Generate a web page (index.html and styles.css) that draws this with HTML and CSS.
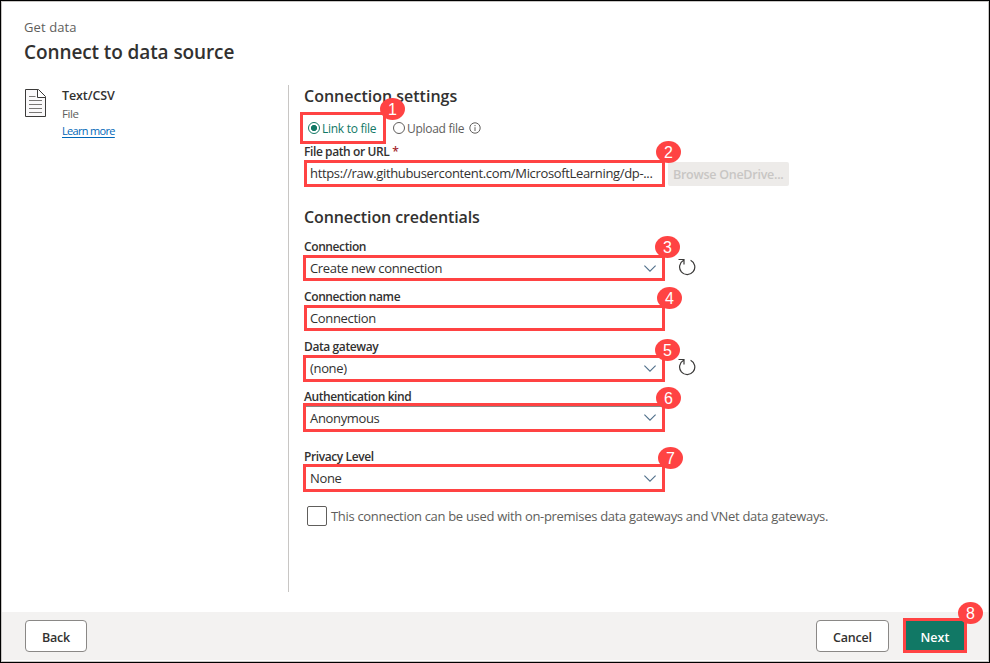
FILE: index.html
```html
<!DOCTYPE html>
<html lang="en">
<head>
<meta charset="utf-8">
<title>Connect to data source</title>
<link rel="stylesheet" href="styles.css">
</head>
<body>
<div class="dialog">
  <header class="header">
    <div class="eyebrow"><span>Get data</span></div>
    <h1 class="title"><span>Connect to data source</span></h1>
  </header>
  <div class="content">
    <aside class="source">
      <svg class="file-icon" width="22" height="30" viewBox="0 0 22 30" fill="none" stroke="#3b3a39"><path d="M.5 1.5H13.5L20.5 8.500V28.500H.5Z" fill="#faf9fa"/><path d="M12.500 1.500V9.500H20.500" fill="#fff"/><path stroke="#797775" d="M4 8.500H10.500M4 12.500H17M4 16.500H17M4 20.500H17M4 24.500H17"/></svg>
      <div class="source-text">
        <div class="source-name"><span>Text/CSV</span></div>
        <div class="source-kind"><span>File</span></div>
        <a class="learn" href="#">Learn more</a>
      </div>
    </aside>
    <main class="settings">
      <h2 class="section-title"><span>Connection settings</span></h2>
      <div class="radios">
        <div class="radio selected"><i class="dot"></i><span>Link to file</span><b class="badge b1">1</b></div>
        <div class="radio"><i class="dot"></i><span>Upload file</span>
          <svg class="info" width="12" height="12" viewBox="0 0 12 12" fill="none" stroke="#605e5c"><circle cx="6" cy="6" r="5.200"/><path d="M6 5.200V9M6 3V4.200"/></svg>
        </div>
      </div>
      <div class="label l-url"><span>File path or URL</span><em>*</em></div>
      <div class="row">
        <div class="box inset h27 raised"><span>https://raw.githubusercontent.com/MicrosoftLearning/dp-...</span><b class="badge b2">2</b></div>
        <div class="browse"><span>Browse OneDrive...</span></div>
      </div>
      <h2 class="section-title second"><span>Connection credentials</span></h2>
      <div class="label l-conn"><span>Connection</span></div>
      <div class="row">
        <div class="box h26"><span>Create new connection</span><svg class="chev" width="12" height="7" viewBox="0 0 12 7"><path d="M.4.6L6 6.200L11.600.6"/></svg><b class="badge b3">3</b></div>
        <svg class="refresh" width="18" height="18" viewBox="0 0 18 18"><path d="M.5 1.500H6V6.500M5.600 2.300A7.600 7.600 0 1 0 12.600 2.200"/></svg>
      </div>
      <div class="label l-name"><span>Connection name</span></div>
      <div class="row"><div class="box inset h26"><span>Connection</span><b class="badge b4">4</b></div></div>
      <div class="label l-gate"><span>Data gateway</span></div>
      <div class="row">
        <div class="box h27 raised"><span>(none)</span><svg class="chev" width="12" height="7" viewBox="0 0 12 7"><path d="M.4.6L6 6.200L11.600.6"/></svg><b class="badge b5">5</b></div>
        <svg class="refresh" width="18" height="18" viewBox="0 0 18 18"><path d="M.5 1.500H6V6.500M5.600 2.300A7.600 7.600 0 1 0 12.600 2.200"/></svg>
      </div>
      <div class="label l-auth"><span>Authentication kind</span></div>
      <div class="row"><div class="box h29"><span>Anonymous</span><svg class="chev" width="12" height="7" viewBox="0 0 12 7"><path d="M.4.6L6 6.200L11.600.6"/></svg><b class="badge b6">6</b></div></div>
      <div class="label l-priv"><span>Privacy Level</span></div>
      <div class="row"><div class="box h28"><span>None</span><svg class="chev" width="12" height="7" viewBox="0 0 12 7"><path d="M.4.6L6 6.200L11.600.6"/></svg><b class="badge b7">7</b></div></div>
      <div class="check"><i class="checkbox"></i><span>This connection can be used with on-premises data gateways and VNet data gateways.</span></div>
    </main>
  </div>
  <footer class="footer">
    <div class="btn back"><span>Back</span></div>
    <div class="btn cancel"><span>Cancel</span></div>
    <div class="next"><span>Next</span><b class="badge b8">8</b></div>
  </footer>
</div>
</body>
</html>
```
FILE: styles.css
```css
* { box-sizing: border-box; }
body { margin: 0; font-family: "Open Sans", "Noto Sans", sans-serif; font-size: 13px; color: #323130; background: #fff; }
.dialog { width: 990px; height: 663px; border: 1px solid #000; box-shadow: inset 0 0 0 1px #c8c6c4; padding: 1px; display: flex; flex-direction: column; }
span { white-space: nowrap; }
.header { height: 83px; padding: 15px 0 0 22px; }
.eyebrow { font-size: 13px; line-height: 20px; color: #605e5c; letter-spacing: .1px; }
.title { margin: 1px 0 0; font-size: 19px; font-weight: 600; line-height: 28px; letter-spacing: -.1px; }
.content { display: flex; height: 527px; }
.source { width: 286px; padding: 3px 0 0 23px; display: flex; }
.file-icon { margin-right: 15px; }
.source-name { font-weight: 600; font-size: 12.500px; line-height: 16px; letter-spacing: -.1px; }
.source-kind { font-size: 11.500px; line-height: 20px; color: #605e5c; letter-spacing: -.4px; }
.learn { display: block; margin-top: -1px; font-size: 11px; line-height: 15px; letter-spacing: -.68px; color: #0067b8; text-underline-offset: 2px; white-space: nowrap; }
.settings { border-left: 1px solid #c8c6c4; height: 507px; width: 600px; padding-left: 14px; }
.section-title { margin: 0; padding-left: 1px; font-size: 16px; font-weight: 600; line-height: 22px; height: 27px; }
.radios { display: flex; margin-left: -3px; height: 32px; align-items: center; }
.radio { display: flex; align-items: center; color: #605e5c; font-size: 12px; letter-spacing: -.28px; padding-left: 7px; }
.dot { width: 12px; height: 12px; border: 1px solid #605e5c; border-radius: 50%; margin-right: 2px; flex: none; }
.selected { position: relative; width: 86px; height: 32px; border: 3px solid #ff4343; padding-left: 5px; color: #117865; }
.selected .dot { border-color: #117865; background: radial-gradient(circle, #117865 0 2.800px, #fff 3.300px); }
.info { margin-left: 5px; }
.label { font-size: 12px; font-weight: 600; line-height: 16px; letter-spacing: -.4px; padding-left: 1px; }
.label em { color: #a4262c; font-style: normal; margin-left: 3px; }
.l-url { height: 16px; }
.row { display: flex; align-items: center; }
.box { position: relative; width: 362px; border: 3px solid #ff4343; padding: 0 6px 0 4px; display: flex; align-items: center; justify-content: space-between; font-size: 13px; letter-spacing: -.34px; }
.inset { width: 361px; margin-left: 1px; padding-left: 3px; }
.raised { padding-bottom: 1px; }
.h26 { height: 26px; } .h27 { height: 27px; } .h28 { height: 28px; }
.h29 { height: 29px; }
.h29::before { content: ""; position: absolute; top: 0; left: 0; right: 0; height: 1px; background: #8a8886; }
.chev { fill: none; stroke: #4f6f8a; stroke-width: 1.100; }
.refresh { margin: 0 0 2px 13px; fill: none; stroke: #3b3a39; stroke-width: 1.200; }
.raised + .refresh { margin-bottom: 3px; }
.browse { width: 121px; height: 24px; margin-left: 3px; border-radius: 2px; background: #edebe9; color: #c8c6c4; font-size: 12.500px; font-weight: 600; line-height: 25px; letter-spacing: -.26px; padding-left: 5px; }
.second { padding-top: 19px; height: 52px; letter-spacing: -.1px; }
.l-conn { height: 16px; }
.l-name { height: 24px; padding-top: 8px; }
.l-gate { height: 24px; padding-top: 8px; }
.l-auth { height: 21px; padding-top: 7px; }
.l-priv { height: 32px; padding-top: 17px; }
.check { display: flex; align-items: center; margin-top: 14px; padding-left: 4px; color: #605e5c; letter-spacing: -.31px; }
.checkbox { width: 20px; height: 20px; border: 1px solid #605e5c; border-radius: 2px; margin-right: 4px; flex: none; }
.footer { height: 48px; background: #f3f2f1; display: flex; align-items: flex-start; }
.btn { height: 32px; margin-top: 8px; border: 1px solid #8a8886; border-radius: 4px; background: #fff; text-align: center; line-height: 33px; font-size: 12.500px; font-weight: 600; letter-spacing: -.2px; }
.back { width: 62px; margin-left: 23px; }
.cancel { width: 73px; margin-left: auto; }
.next { position: relative; width: 64px; height: 35px; margin: 6px 21px 0 14px; border: 3px solid #ff4343; background: #117865; color: #fff; text-align: center; line-height: 34px; font-size: 12.500px; font-weight: 600; }
.badge { position: absolute; z-index: 2; width: 25px; height: 22px; border-radius: 50%; background: #ff4343; color: #fff; font: 400 16px/23px "Liberation Sans", sans-serif; letter-spacing: 0; text-align: center; }
.b1 { left: 77px; top: -17.500px; }
.b2 { left: 349px; top: -21.700px; }
.b3 { left: 349px; top: -22.500px; }
.b4 { left: 350px; top: -21.500px; }
.b5 { left: 349px; top: -19.500px; }
.b6 { left: 350px; top: -19.500px; }
.b7 { left: 352px; top: -20.500px; }
.b8 { left: 52px; top: -18.700px; }
```
